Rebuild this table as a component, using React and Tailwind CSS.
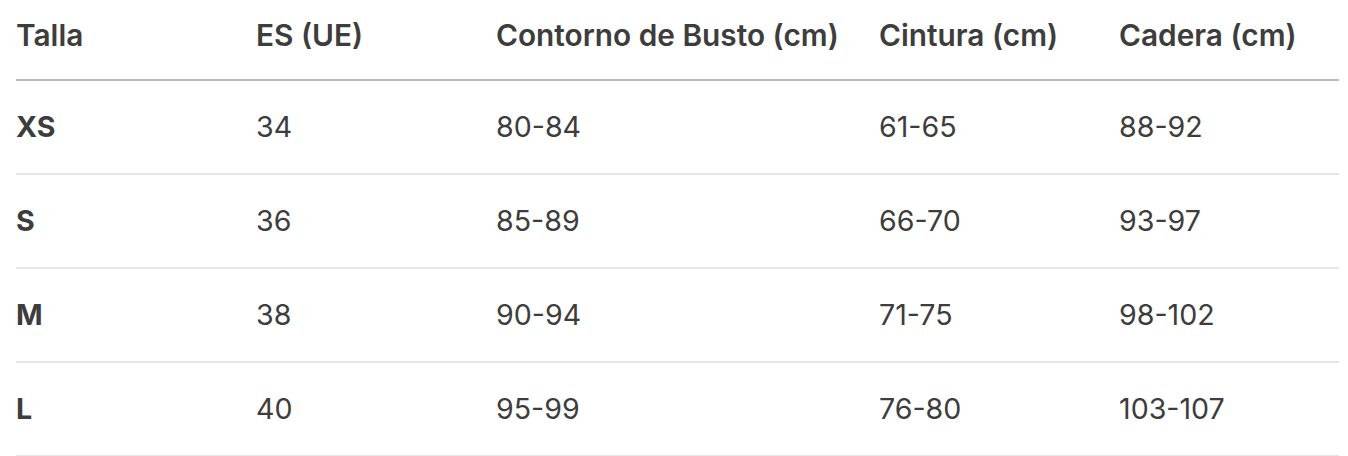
const rows = [
  { talla: "XS", es: "34", busto: "80-84", cintura: "61-65", cadera: "88-92" },
  { talla: "S", es: "36", busto: "85-89", cintura: "66-70", cadera: "93-97" },
  { talla: "M", es: "38", busto: "90-94", cintura: "71-75", cadera: "98-102" },
  { talla: "L", es: "40", busto: "95-99", cintura: "76-80", cadera: "103-107" },
];

function App() {
  return (
    <div className="bg-white min-h-screen pl-4 text-[#3d3d3d] font-['Inter','Liberation_Sans',sans-serif]">
      <table className="w-[1323px] table-fixed border-collapse text-left text-[28.6px]">
        <colgroup>
          <col className="w-[240px]" />
          <col className="w-[240px]" />
          <col className="w-[383px]" />
          <col className="w-[240px]" />
          <col />
        </colgroup>
        <thead>
          <tr className="border-b-2 border-[#bcbcbc] h-[80px] text-[29.8px]">
            <th className="font-semibold p-0 pb-[9px]">Talla</th>
            <th className="font-semibold p-0 pb-[9px]">ES (UE)</th>
            <th className="font-semibold p-0 pb-[9px]">Contorno de Busto (cm)</th>
            <th className="font-semibold p-0 pb-[9px]">Cintura (cm)</th>
            <th className="font-semibold p-0 pb-[9px]">Cadera (cm)</th>
          </tr>
        </thead>
        <tbody>
          {rows.map((r) => (
            <tr key={r.talla} className="border-b-2 border-[#e6e6e6] h-[94px]">
              <td className="p-0 font-bold">{r.talla}</td>
              <td className="p-0">{r.es}</td>
              <td className="p-0">{r.busto}</td>
              <td className="p-0">{r.cintura}</td>
              <td className="p-0">{r.cadera}</td>
            </tr>
          ))}
        </tbody>
      </table>
    </div>
  );
}

export default App;
